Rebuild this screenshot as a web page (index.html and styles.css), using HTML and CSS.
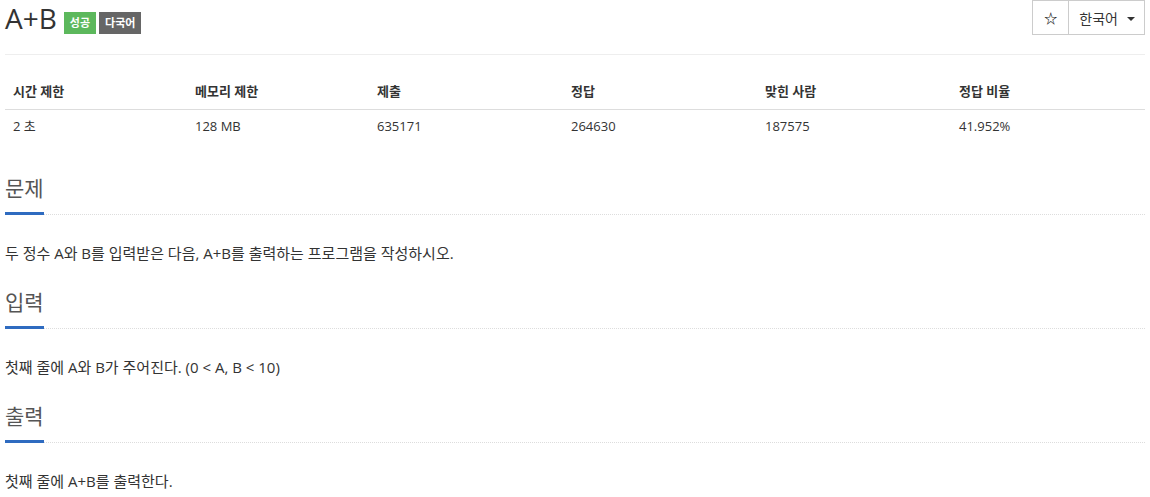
FILE: index.html
```html
<!DOCTYPE html>
<html lang="ko">
<head>
    <meta charset="UTF-8">
    <title>A+B</title>
    <link rel="stylesheet" href="styles.css">
</head>
<body>
    <div class="page">
        <div class="page-header">
            <div class="title-wrap">
                <span class="title">A+B</span>
                <span class="label label-success">성공</span>
                <span class="label label-default">다국어</span>
            </div>
            <div class="btn-group">
                <span class="btn btn-star">☆</span>
                <span class="btn btn-lang">한국어 <span class="caret"></span></span>
            </div>
        </div>

        <table class="problem-info">
            <thead>
                <tr>
                    <th class="c1">시간 제한</th>
                    <th class="c2">메모리 제한</th>
                    <th class="c3">제출</th>
                    <th class="c4">정답</th>
                    <th class="c5">맞힌 사람</th>
                    <th>정답 비율</th>
                </tr>
            </thead>
            <tbody>
                <tr>
                    <td>2 초</td>
                    <td>128 MB</td>
                    <td>635171</td>
                    <td>264630</td>
                    <td>187575</td>
                    <td>41.952%</td>
                </tr>
            </tbody>
        </table>

        <section class="problem-section">
            <div class="headline"><h2>문제</h2></div>
            <p>두 정수 A와 B를 입력받은 다음, A+B를 출력하는 프로그램을 작성하시오.</p>
        </section>

        <section class="problem-section">
            <div class="headline"><h2>입력</h2></div>
            <p>첫째 줄에 A와 B가 주어진다. (0 &lt; A, B &lt; 10)</p>
        </section>

        <section class="problem-section">
            <div class="headline"><h2>출력</h2></div>
            <p>첫째 줄에 A+B를 출력한다.</p>
        </section>
    </div>
</body>
</html>
```

FILE: styles.css
```css
body {
    margin: 0;
    padding: 0;
    background: #fff;
    color: #333;
    font-family: "Open Sans", "Noto Sans CJK KR", sans-serif;
    font-size: 14px;
}

.page {
    padding: 0 5px;
}

.page-header {
    display: flex;
    justify-content: space-between;
    align-items: flex-start;
    height: 54px;
    border-bottom: 1px solid #eee;
}

.title-wrap {
    display: flex;
    align-items: center;
    height: 44px;
}

.title {
    font-size: 28px;
    color: #333;
    line-height: 1;
    margin-right: 7px;
    margin-top: -8px;
}

.label {
    display: inline-block;
    color: #fff;
    font-size: 11px;
    font-weight: bold;
    line-height: 22px;
    padding: 0 6px;
    margin-right: 3px;
    margin-top: 2px;
}
.label-success { background: #5cb85c; }
.label-default { background: #666; }

.btn-group {
    display: flex;
    border: 1px solid #ccc;
    height: 33px;
}

.btn {
    display: flex;
    align-items: center;
    font-size: 14px;
    color: #333;
}

.btn-star {
    width: 35px;
    justify-content: center;
    border-right: 1px solid #ccc;
    font-size: 13px;
    font-weight: bold;
    color: #222;
}

.btn-lang {
    padding: 0 9px 0 10px;
    gap: 9px;
}

.caret {
    width: 0;
    height: 0;
    border-left: 4px solid transparent;
    border-right: 4px solid transparent;
    border-top: 4px solid #333;
    margin-top: 2px;
}

.problem-info {
    width: 100%;
    border-collapse: collapse;
    margin-top: 18px;
    margin-bottom: 27px;
}

.problem-info th,
.problem-info td {
    text-align: left;
    padding: 8px;
    line-height: 20px;
}

.problem-info th {
    font-size: 13px;
    font-weight: bold;
    border-bottom: 1px solid #ddd;
}

.problem-info td {
    font-size: 13px;
    padding-top: 6px;
}

.c1, .c2 { width: 166px; }
.c3, .c4, .c5 { width: 178px; }

.problem-section {
    margin-bottom: 22px;
}

.headline {
    display: flex;
    border-bottom: 1px dotted #ddd;
    margin-bottom: 28px;
}

.headline h2 {
    margin: 0;
    font-size: 21px;
    font-weight: normal;
    color: #555;
    line-height: 34px;
    padding-bottom: 7px;
    border-bottom: 3px solid #2e6bc0;
    margin-bottom: -1px;
}

.problem-section p {
    margin: 0;
    font-size: 15px;
    line-height: 20px;
}
```
